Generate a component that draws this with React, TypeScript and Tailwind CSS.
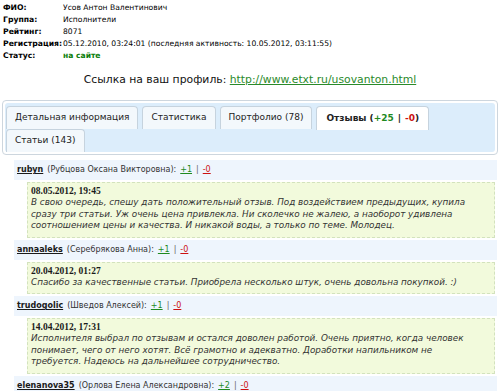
const reviews = [
  {
    login: "rubyn",
    name: "Рубцова Оксана Викторовна",
    plus: "+1",
    date: "08.05.2012, 19:45",
    lines: [
      "В свою очередь, спешу дать положительный отзыв. Под воздействием предыдущих, купила",
      "сразу три статьи. Уж очень цена привлекла. Ни сколечко не жалею, а наоборот удивлена",
      "соотношением цены и качества. И никакой воды, а только по теме. Молодец.",
    ],
  },
  {
    login: "annaaleks",
    name: "Серебрякова Анна",
    plus: "+1",
    date: "20.04.2012, 01:27",
    lines: ["Спасибо за качественные статьи. Приобрела несколько штук, очень довольна покупкой. :)"],
  },
  {
    login: "trudogolic",
    name: "Шведов Алексей",
    plus: "+1",
    date: "14.04.2012, 17:31",
    lines: [
      "Исполнителя выбрал по отзывам и остался доволен работой. Очень приятно, когда человек",
      "понимает, чего от него хотят. Всё грамотно и адекватно. Доработки напильником не",
      "требуется. Надеюсь на дальнейшее сотрудничество.",
    ],
  },
  {
    login: "elenanova35",
    name: "Орлова Елена Александровна",
    plus: "+2",
    date: "",
    lines: [],
  },
];

const info = [
  ["ФИО:", "Усов Антон Валентинович"],
  ["Группа:", "Исполнители"],
  ["Рейтинг:", "8071"],
  ["Регистрация:", "05.12.2010, 03:24:01 (последняя активность: 10.05.2012, 03:11:55)"],
];

function ReviewHeader({ login, name, plus }: { login: string; name: string; plus: string }) {
  return (
    <div className="ml-[14px] mr-[3px] flex h-[20px] items-center bg-[#eef5fd] pl-[3px] text-[8px] text-[#222]">
      <span className="font-bold text-[#1a1a1a] underline">{login}</span>
      <span className="ml-[4px] text-[#333]">({name}):</span>
      <span className="ml-[4px] text-[#1f8a1f] underline">{plus}</span>
      <span className="mx-[4px] text-[#666]">|</span>
      <span className="text-[#cc1111] underline">-0</span>
    </div>
  );
}

const tab = "flex h-[23px] items-center rounded-t-[4px] border border-b-0 border-[#c6d3de] bg-[#f3f8fc] px-[8px]";

export default function App() {
  return (
    <div className="h-[391px] w-[500px] overflow-hidden bg-white text-black [font-family:'DejaVu_Sans',sans-serif]">
      <div className="pl-[3px] pt-[2px]">
        {info.map(([label, value]) => (
          <div key={label} className="flex h-[12px] items-center whitespace-nowrap text-[7.6px]">
            <span className="w-[60px] text-[7.7px] font-bold">{label}</span>
            <span>{value}</span>
          </div>
        ))}
        <div className="flex h-[12px] items-center text-[7.6px]">
          <span className="w-[60px] text-[7.7px] font-bold">Статус:</span>
          <span className="font-bold text-[#0a7d0a]">на сайте</span>
        </div>
      </div>

      <div className="mt-[10px] text-center text-[10.8px] text-[#111]">
        Ссылка на ваш профиль:{" "}
        <span className="text-[#2a8a2a] underline">http://www.etxt.ru/usovanton.html</span>
      </div>

      <div className="mx-[2px] mt-[12px] rounded-[4px] border border-[#cdd6de] bg-white p-[2px]">
        <div className="flex flex-wrap gap-x-[4px] rounded-[3px] bg-[#dcedfb] pl-[1px] pt-[3px] text-[9px] text-[#222]">
          <div className={tab}>Детальная информация</div>
          <div className={tab}>Статистика</div>
          <div className={tab}>Портфолио (78)</div>
          <div className="flex h-[24px] items-center rounded-t-[4px] border border-b-0 border-[#c6d3de] bg-white px-[9px] font-bold">
            <span>Отзывы (</span>
            <span className="text-[#1f8a1f]">+25</span>
            <span className="mx-[4px]">|</span>
            <span className="text-[#cc1111]">-0</span>
            <span>)</span>
          </div>
          <div className="-mt-[1px] flex h-[23px] items-center rounded-t-[4px] border border-b-0 border-[#c6d3de] bg-[#f3f8fc] px-[8px]">
            Статьи (143)
          </div>
        </div>
      </div>

      <div className="mt-[5px] flex flex-col gap-[2px]">
        {reviews.map((r) => (
          <div key={r.login} className="flex flex-col gap-[2px]">
            <ReviewHeader login={r.login} name={r.name} plus={r.plus} />
            {r.date ? (
              <div className="ml-[27px] mr-[5px] border border-dashed border-[#d3e2bd] bg-[#f2fadc] px-[3px] pb-[5px] pt-[3px]">
                <div className="text-[9.5px] font-bold leading-[11px] text-[#1a1a1a] [font-family:'Liberation_Serif',serif]">
                  {r.date}
                </div>
                {r.lines.map((line) => (
                  <div key={line} className="text-[8.8px] italic leading-[11.5px] text-[#333]">
                    {line}
                  </div>
                ))}
              </div>
            ) : null}
          </div>
        ))}
      </div>
    </div>
  );
}
